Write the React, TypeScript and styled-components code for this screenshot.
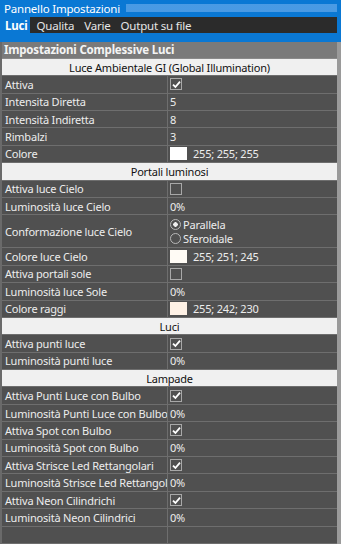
import React from "react";
import styled, { createGlobalStyle } from "styled-components";

const GlobalStyle = createGlobalStyle`
  html, body {
    margin: 0;
    padding: 0;
    background: #f0f0f0;
  }
  body {
    font-family: "Noto Sans", "Open Sans", sans-serif;
    font-size: 11px;
    letter-spacing: -0.2px;
  }
`;

type Row =
  | { kind: "section"; title: string }
  | { kind: "text"; label: string; value: string }
  | { kind: "check"; label: string; checked: boolean }
  | { kind: "color"; label: string; rgb: [number, number, number] }
  | { kind: "radio"; label: string; options: string[]; selected: number };

const rows: Row[] = [
  { kind: "section", title: "Luce Ambientale GI (Global Illumination)" },
  { kind: "check", label: "Attiva", checked: true },
  { kind: "text", label: "Intensita Diretta", value: "5" },
  { kind: "text", label: "Intensità Indiretta", value: "8" },
  { kind: "text", label: "Rimbalzi", value: "3" },
  { kind: "color", label: "Colore", rgb: [255, 255, 255] },
  { kind: "section", title: "Portali luminosi" },
  { kind: "check", label: "Attiva luce Cielo", checked: false },
  { kind: "text", label: "Luminosità luce Cielo", value: "0%" },
  {
    kind: "radio",
    label: "Conformazione luce Cielo",
    options: ["Parallela", "Sferoidale"],
    selected: 0,
  },
  { kind: "color", label: "Colore luce Cielo", rgb: [255, 251, 245] },
  { kind: "check", label: "Attiva portali sole", checked: false },
  { kind: "text", label: "Luminosità luce Sole", value: "0%" },
  { kind: "color", label: "Colore raggi", rgb: [255, 242, 230] },
  { kind: "section", title: "Luci" },
  { kind: "check", label: "Attiva punti luce", checked: true },
  { kind: "text", label: "Luminosità punti luce", value: "0%" },
  { kind: "section", title: "Lampade" },
  { kind: "check", label: "Attiva Punti Luce con Bulbo", checked: true },
  { kind: "text", label: "Luminosità Punti Luce con Bulbo", value: "0%" },
  { kind: "check", label: "Attiva Spot con Bulbo", checked: true },
  { kind: "text", label: "Luminosità Spot con Bulbo", value: "0%" },
  { kind: "check", label: "Attiva Strisce Led Rettangolari", checked: true },
  { kind: "text", label: "Luminosità Strisce Led Rettangolari", value: "0%" },
  { kind: "check", label: "Attiva Neon Cilindrichi", checked: true },
  { kind: "text", label: "Luminosità Neon Cilindrici", value: "0%" },
];

const tabs = ["Luci", "Qualita", "Varie", "Output su file"];

export default function App() {
  return (
    <>
      <GlobalStyle />
      <Window>
        <TitleBar>
          <TitleText>Pannello Impostazioni</TitleText>
          <Grip />
        </TitleBar>
        <TabBar>
          {tabs.map((t, i) => (
            <Tab key={t} active={i === 0}>
              {t}
            </Tab>
          ))}
          <TabFill />
        </TabBar>
        <TabUnderline />
        <Grid>
          <PanelHeader>Impostazioni Complessive Luci</PanelHeader>
          {rows.map((row, i) => {
            if (row.kind === "section") {
              return <Section key={i}>{row.title}</Section>;
            }
            return (
              <PropRow key={i} tall={row.kind === "radio"}>
                <Label>{row.label}</Label>
                <Value>
                  {row.kind === "text" && row.value}
                  {row.kind === "check" && (
                    <CheckBox>
                      {row.checked && (
                        <svg width="9" height="9" viewBox="0 0 9 9">
                          <path
                            d="M1 4.6 L3.4 7 L8 1.6"
                            fill="none"
                            stroke="#fff"
                            strokeWidth="1.8"
                          />
                        </svg>
                      )}
                    </CheckBox>
                  )}
                  {row.kind === "color" && (
                    <>
                      <Swatch
                        style={{
                          background: `rgb(${row.rgb[0]}, ${row.rgb[1]}, ${row.rgb[2]})`,
                        }}
                      />
                      <SwatchText>{row.rgb.join("; ")}</SwatchText>
                    </>
                  )}
                  {row.kind === "radio" && (
                    <RadioList>
                      {row.options.map((o, j) => (
                        <RadioItem key={o}>
                          <RadioCircle on={j === row.selected} />
                          {o}
                        </RadioItem>
                      ))}
                    </RadioList>
                  )}
                </Value>
              </PropRow>
            );
          })}
          <PropRow tall={false}>
            <Label />
            <Value />
          </PropRow>
        </Grid>
      </Window>
    </>
  );
}

const Window = styled.div`
  width: 341px;
  height: 544px;
  display: flex;
  flex-direction: column;
  background: #0a78d4;
  overflow: hidden;
`;

const TitleBar = styled.div`
  height: 18px;
  display: flex;
  align-items: center;
  padding-left: 4px;
  gap: 6px;
`;

const TitleText = styled.span`
  color: #fff;
  font-size: 11.5px;
  white-space: nowrap;
`;

const Grip = styled.div`
  flex: 1;
  height: 8px;
  margin-right: 4px;
  background-image: radial-gradient(
    circle,
    rgba(120, 180, 240, 0.9) 0.6px,
    transparent 0.9px
  );
  background-size: 2px 2px;
`;

const TabBar = styled.div`
  height: 18px;
  display: flex;
  padding-left: 2px;
  padding-right: 4px;
`;

const Tab = styled.div<{ active: boolean }>`
  display: flex;
  align-items: center;
  padding: 0 ${({ active }) => (active ? "3px" : "5px")};
  color: ${({ active }) => (active ? "#fff" : "#e6e6e6")};
  font-weight: ${({ active }) => (active ? 700 : 400)};
  background: ${({ active }) => (active ? "#0a78d4" : "#2b2b2b")};
  font-size: 11.5px;
  white-space: nowrap;
  &:nth-child(2) {
    padding-left: 6px;
  }
`;

const TabFill = styled.div`
  flex: 1;
  background: #2b2b2b;
`;

const TabUnderline = styled.div`
  height: 9px;
`;

const Grid = styled.div`
  flex: 1;
  display: flex;
  flex-direction: column;
  background: #505050;
  border-left: 2px solid #6a6a6a;
  border-right: 4px solid #9a9a9a;
`;

const PanelHeader = styled.div`
  height: 16px;
  display: flex;
  align-items: center;
  padding-left: 2px;
  background: #7a7a7a;
  color: #f4f4f4;
  font-weight: 700;
  font-size: 11.5px;
  border-bottom: 1px solid #8a8a8a;
`;

const Section = styled.div`
  height: 16.4px;
  display: flex;
  align-items: center;
  justify-content: center;
  background: #f0f0f0;
  color: #111;
  border-bottom: 1px solid #6e6e6e;
`;

const PropRow = styled.div<{ tall: boolean }>`
  height: ${({ tall }) => (tall ? "32px" : "16.4px")};
  display: flex;
  border-bottom: 1px solid #6e6e6e;
`;

const Label = styled.div`
  width: 162px;
  display: flex;
  align-items: center;
  padding-left: 3px;
  color: #ededed;
  white-space: nowrap;
  overflow: hidden;
  border-right: 1px solid #6e6e6e;
`;

const Value = styled.div`
  flex: 1;
  display: flex;
  align-items: center;
  padding-left: 2px;
  color: #ededed;
`;

const CheckBox = styled.span`
  width: 10px;
  height: 10px;
  border: 1px solid #a8a8a8;
  background: #505050;
  display: flex;
  align-items: center;
  justify-content: center;
`;

const Swatch = styled.span`
  width: 17px;
  height: 13px;
`;

const SwatchText = styled.span`
  margin-left: 6px;
`;

const RadioList = styled.div`
  display: flex;
  flex-direction: column;
  gap: 1px;
`;

const RadioItem = styled.div`
  display: flex;
  align-items: center;
  gap: 2px;
  height: 13px;
`;

const RadioCircle = styled.span<{ on: boolean }>`
  width: 9px;
  height: 9px;
  border-radius: 50%;
  border: 1px solid #b8b8b8;
  background: ${({ on }) =>
    on ? "radial-gradient(circle, #f0f0f0 2px, transparent 2.5px)" : "transparent"};
`;
